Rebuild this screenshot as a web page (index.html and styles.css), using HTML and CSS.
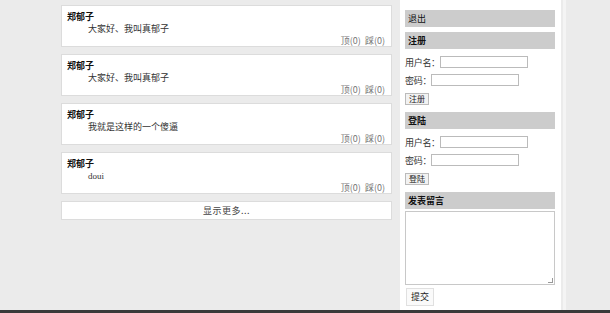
FILE: index.html
```
<!DOCTYPE html>
<html>
<head>
<meta charset="utf-8">
<link rel="stylesheet" href="styles.css">
</head>
<body>
<div class="page">
  <div class="main">
    <div class="posts">
      <div class="card">
        <div class="name">郑郁子</div>
        <div class="content">大家好、我叫真郁子</div>
        <div class="votes">顶(0) 踩(0)</div>
      </div>
      <div class="card">
        <div class="name">郑郁子</div>
        <div class="content">大家好、我叫真郁子</div>
        <div class="votes">顶(0) 踩(0)</div>
      </div>
      <div class="card">
        <div class="name">郑郁子</div>
        <div class="content">我就是这样的一个傻逼</div>
        <div class="votes">顶(0) 踩(0)</div>
      </div>
      <div class="card">
        <div class="name">郑郁子</div>
        <div class="content latin">doui</div>
        <div class="votes">顶(0) 踩(0)</div>
      </div>
      <div class="more">显示更多...</div>
    </div>
    <div class="sidebar">
      <div class="head normal">退出</div>
      <div class="head">注册</div>
      <div class="row">用户名：<span class="input"></span></div>
      <div class="row">密码：<span class="input"></span></div>
      <div class="row btnrow"><span class="btn">注册</span></div>
      <div class="head">登陆</div>
      <div class="row">用户名：<span class="input"></span></div>
      <div class="row">密码：<span class="input"></span></div>
      <div class="row btnrow"><span class="btn">登陆</span></div>
      <div class="head tight">发表留言</div>
      <div class="textarea"><span class="grip"></span></div>
      <div class="row"><span class="btn big">提交</span></div>
    </div>
    <div class="edge"></div>
  </div>
  <div class="taskbar"></div>
</div>
</body>
</html>
```
FILE: styles.css
```
html, body {
  margin: 0;
  padding: 0;
}
body {
  background: #ebebeb;
  font-family: "Noto Sans CJK SC", "DejaVu Sans", sans-serif;
  font-size: 9px;
  color: #222;
}
.page {
  height: 313px;
  display: flex;
  flex-direction: column;
  overflow: hidden;
}
.main {
  flex: 1;
  display: flex;
  align-items: stretch;
}
.posts {
  margin-left: 61px;
  width: 331px;
  padding-top: 5px;
  display: flex;
  flex-direction: column;
  gap: 7px;
}
.card {
  background: #fff;
  border: 1px solid #dcdcdc;
  box-sizing: border-box;
  height: 42px;
  padding: 5px 6px 0 5px;
  line-height: 12px;
}
.name {
  font-weight: bold;
  color: #111;
}
.content {
  padding-left: 21px;
  color: #333;
}
.latin {
  font-family: "Liberation Serif", serif;
}
.votes {
  text-align: right;
  color: #777;
  word-spacing: 2px;
}
.more {
  background: #fff;
  border: 1px solid #dcdcdc;
  box-sizing: border-box;
  height: 19px;
  line-height: 17px;
  text-align: center;
  color: #444;
  letter-spacing: 0.5px;
}
.sidebar {
  margin-left: 8px;
  width: 161px;
  background: #fff;
  box-sizing: border-box;
  padding: 10px 6px 0 5px;
  display: flex;
  flex-direction: column;
}
.head {
  background: #cccccc;
  height: 17px;
  line-height: 17px;
  padding-left: 3px;
  font-weight: bold;
  color: #111;
  margin-bottom: 4px;
}
.head.normal {
  font-weight: normal;
  margin-bottom: 5px;
}
.head.tight {
  margin-bottom: 2px;
}
.row {
  display: flex;
  align-items: center;
  height: 18px;
  color: #333;
  letter-spacing: -0.3px;
}
.row.btnrow {
  height: 19px;
  margin-bottom: 4px;
}
.input {
  display: inline-block;
  width: 86px;
  height: 10px;
  border: 1px solid #bbb;
  background: #fff;
}
.btn {
  display: inline-block;
  border: 1px solid #bbb;
  background: #f2f2f2;
  font-size: 8px;
  line-height: 10px;
  padding: 0 3px;
  color: #222;
  letter-spacing: 0;
}
.btn.big {
  font-size: 9px;
  line-height: 14px;
  padding: 1px 4px;
  margin-left: 1px;
  margin-top: 2px;
  background: #fafafa;
  border-color: #e0e0e0;
}
.textarea {
  position: relative;
  height: 72px;
  border: 1px solid #c8c8c8;
  margin-bottom: 2px;
}
.grip {
  position: absolute;
  right: 1px;
  bottom: 1px;
  width: 4px;
  height: 4px;
  border-right: 1px solid #999;
  border-bottom: 1px solid #999;
}
.edge {
  width: 3px;
  margin-left: 2px;
  background: #f4f4f4;
}
.taskbar {
  height: 3px;
  background: #3a3a3a;
}
```
